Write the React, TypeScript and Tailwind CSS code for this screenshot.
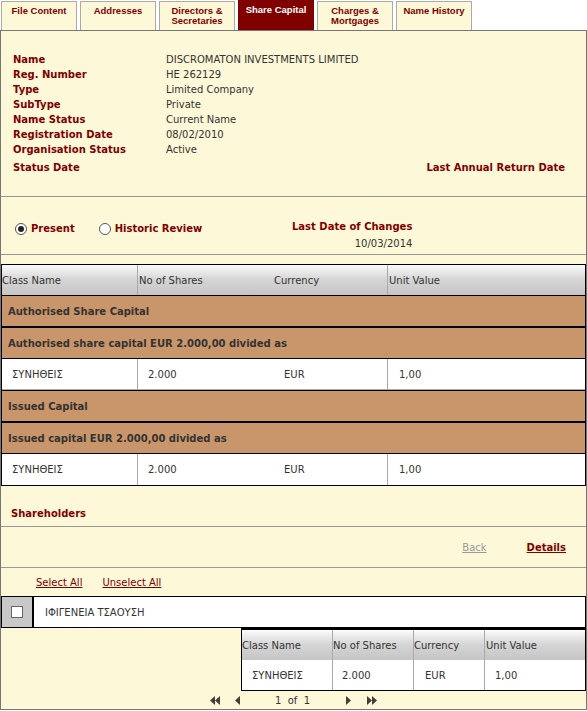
import { ReactNode } from "react"

const tabs = [
  { label: "File Content" },
  { label: "Addresses" },
  { label: "Directors &\nSecretaries" },
  { label: "Share Capital", active: true },
  { label: "Charges &\nMortgages" },
  { label: "Name History" },
]

const details = [
  ["Name", "DISCROMATON INVESTMENTS LIMITED"],
  ["Reg. Number", "HE 262129"],
  ["Type", "Limited Company"],
  ["SubType", "Private"],
  ["Name Status", "Current Name"],
  ["Registration Date", "08/02/2010"],
  ["Organisation Status", "Active"],
]

const Radio = ({ checked, label }: { checked?: boolean; label: string }) => (
  <label className="flex items-center gap-[4px]">
    <span className="w-[12px] h-[12px] rounded-full border border-[#555] bg-white flex items-center justify-center">
      {checked && <span className="w-[6px] h-[6px] rounded-full bg-[#222]" />}
    </span>
    <span className="font-bold text-[#800000]">{label}</span>
  </label>
)

const GroupRow = ({ children }: { children: ReactNode }) => (
  <div className="h-[32px] border-y border-black bg-[#c9956a] pl-[6px] flex items-center font-bold text-[#333]">
    {children}
  </div>
)

const ShareRow = () => (
  <div className="h-[31px] bg-white flex items-center text-[#333] border-b border-[#aaa] last:border-b-0">
    <div className="w-[136px] h-full border-r border-[#aaa] pl-[10px] flex items-center">ΣΥΝΗΘΕΙΣ</div>
    <div className="w-[136px] pl-[10px]">2.000</div>
    <div className="w-[114px] h-full border-r border-[#aaa] pl-[10px] flex items-center">EUR</div>
    <div className="pl-[11px]">1,00</div>
  </div>
)

const TriLeft = () => <path d="M5 0 L5 9 L0 4.5 Z" />

const PagerIcon = ({ dir, double }: { dir: "l" | "r"; double?: boolean }) => (
  <svg
    width={double ? 10 : 5}
    height="9"
    viewBox={double ? "0 0 10 9" : "0 0 5 9"}
    className={dir === "r" ? "-scale-x-100" : ""}
    fill="#4a3c35"
  >
    <TriLeft />
    {double && (
      <g transform="translate(5 0)">
        <TriLeft />
      </g>
    )}
  </svg>
)

export default function App() {
  return (
    <div
      className="w-[587px] h-[711px] bg-white text-[10px] leading-[15px] text-[#333]"
      style={{ fontFamily: '"DejaVu Sans", Verdana, sans-serif' }}
    >
      {/* tab strip */}
      <div
        className="h-[30px] flex items-end gap-[3px] pl-[1px] text-[9.5px]"
        style={{ fontFamily: '"Liberation Sans", Arial, sans-serif' }}
      >
        {tabs.map((t) =>
          t.active ? (
            <div
              key={t.label}
              className="w-[76px] h-[30px] bg-[#800000] text-white font-bold text-center leading-[10px] pt-[5px] whitespace-pre-line"
            >
              {t.label}
            </div>
          ) : (
            <div
              key={t.label}
              className="w-[76px] h-[29px] border border-b-0 border-[#aaa] bg-[#fdf8d8] text-[#800000] font-bold text-center leading-[10px] pt-[4px] whitespace-pre-line"
            >
              {t.label}
            </div>
          )
        )}
      </div>

      <div className="h-[680px] border border-[#777] bg-[#fdf8d8]">
        {/* company details */}
        <div className="pt-[21px] pb-[21px] border-b border-[#999]">
          <div className="pl-[12px]">
            {details.map(([k, v]) => (
              <div key={k} className="flex h-[15px]">
                <div className="w-[153px] font-bold text-[#800000]">{k}</div>
                <div>{v}</div>
              </div>
            ))}
          </div>
          <div className="mt-[3px] flex justify-between pl-[12px] pr-[21px] font-bold text-[#800000]">
            <span>Status Date</span>
            <span>Last Annual Return Date</span>
          </div>
        </div>

        {/* view mode */}
        <div className="h-[58px] flex items-start border-b border-[#999]">
          <div className="w-[291px] pt-[24px] pl-[14px] flex gap-[24px]">
            <Radio checked label="Present" />
            <Radio label="Historic Review" />
          </div>
          <div className="pt-[21px] flex flex-col items-end leading-[17px]">
            <span className="font-bold text-[#800000]">Last Date of Changes</span>
            <span>10/03/2014</span>
          </div>
        </div>

        {/* share capital table */}
        <div className="mt-[9px] border border-black">
          <div className="h-[30px] flex items-center bg-gradient-to-b from-[#fbfbfb] via-[#d4d4d4] to-[#c6c6c6]">
            <div className="w-[136px] h-full border-r border-[#aaa] flex items-center">Class Name</div>
            <div className="w-[136px] pl-[1px]">No of Shares</div>
            <div className="w-[114px] h-full border-r border-[#aaa] flex items-center">Currency</div>
            <div className="pl-[1px]">Unit Value</div>
          </div>
          <GroupRow>Authorised Share Capital</GroupRow>
          <GroupRow>Authorised share capital EUR 2.000,00 divided as</GroupRow>
          <ShareRow />
          <GroupRow>Issued Capital</GroupRow>
          <GroupRow>Issued capital EUR 2.000,00 divided as</GroupRow>
          <ShareRow />
        </div>

        {/* shareholders */}
        <div className="pt-[20px] pb-[5px] pl-[10px] border-b border-[#999] font-bold text-[#800000]">
          Shareholders
        </div>
        <div className="h-[41px] pt-[1px] flex items-center justify-end gap-[40px] pr-[20px] border-b border-[#999]">
          <a className="underline text-[#999]">Back</a>
          <a className="underline font-bold text-[#800000]">Details</a>
        </div>
        <div className="pt-[7px] pb-[6px] pl-[35px] flex gap-[20px] text-[#800000]">
          <a className="underline">Select All</a>
          <a className="underline">Unselect All</a>
        </div>

        <div className="h-[32px] border border-black bg-white flex">
          <div className="w-[32px] bg-[#c8c8c8] border-r-2 border-black flex items-center justify-center">
            <span className="w-[12px] h-[12px] border border-[#666] bg-white" />
          </div>
          <div className="pl-[11px] flex items-center">ΙΦΙΓΕΝΕΙΑ ΤΣΑΟΥΣΗ</div>
        </div>

        <div className="ml-[240px] border-x border-b border-t-2 border-black bg-white">
          <div className="h-[30px] flex items-center bg-gradient-to-b from-[#fbfbfb] via-[#d4d4d4] to-[#c6c6c6]">
            <div className="w-[91px] h-full border-r border-[#aaa] flex items-center">Class Name</div>
            <div className="w-[81px] h-full border-r border-[#aaa] flex items-center">No of Shares</div>
            <div className="w-[71px] h-full border-r border-[#aaa] flex items-center">Currency</div>
            <div className="pl-[1px]">Unit Value</div>
          </div>
          <div className="h-[30px] flex items-center">
            <div className="w-[91px] h-full border-r border-[#aaa] pl-[10px] flex items-center">ΣΥΝΗΘΕΙΣ</div>
            <div className="w-[81px] h-full border-r border-[#aaa] pl-[9px] flex items-center">2.000</div>
            <div className="w-[71px] h-full border-r border-[#aaa] pl-[11px] flex items-center">EUR</div>
            <div className="pl-[10px]">1,00</div>
          </div>
        </div>

        {/* pager */}
        <div className="h-[19px] flex items-center pl-[209px]">
          <PagerIcon dir="l" double />
          <span className="ml-[15px]">
            <PagerIcon dir="l" />
          </span>
          <span className="ml-[35px]">1&nbsp;&nbsp;of&nbsp;&nbsp;1</span>
          <span className="ml-[36px]">
            <PagerIcon dir="r" />
          </span>
          <span className="ml-[16px]">
            <PagerIcon dir="r" double />
          </span>
        </div>
      </div>
    </div>
  )
}
